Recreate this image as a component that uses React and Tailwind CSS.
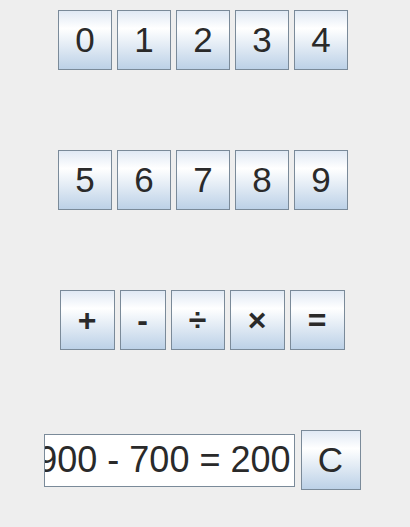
import React from "react";

const btn =
  "h-[60px] flex items-center justify-center border border-[#7a8a99] bg-[linear-gradient(to_bottom,#e0e9f4_0%,#ffffff_30%,#bcd1e7_100%)] text-[#2a2a2a]";

const Key = ({ label, w = "w-[54px]", op = false }) => (
  <button
    className={`${btn} ${w} ${op ? "text-[32px] font-bold" : "text-[35px]"}`}
  >
    {label}
  </button>
);

export default function App() {
  return (
    <div
      className="w-[410px] h-[527px] overflow-hidden bg-[#eeeeee]"
      style={{ fontFamily: '"Liberation Sans", Arial, sans-serif' }}
    >
      <div className="w-[406px] flex flex-col items-center pt-[10px] gap-[80px]">
        <div className="flex gap-[5px]">
          {["0", "1", "2", "3", "4"].map((d) => (
            <Key key={d} label={d} />
          ))}
        </div>
        <div className="flex gap-[5px]">
          {["5", "6", "7", "8", "9"].map((d) => (
            <Key key={d} label={d} />
          ))}
        </div>
        <div className="flex gap-[5px] mr-[2px]">
          <Key label="+" w="w-[55px]" op />
          <Key label="-" w="w-[46px]" op />
          <Key label="÷" w="w-[54px]" op />
          <Key label="×" w="w-[55px]" op />
          <Key label="=" w="w-[55px]" op />
        </div>
        <div className="flex items-center gap-[6px] mr-[2px]">
          <div className="w-[251px] h-[53px] bg-white border border-[#7a8a99] flex items-center justify-end overflow-hidden pr-[3px]">
            <span className="whitespace-nowrap text-[36px] text-[#2a2a2a]">
              900 - 700 = 200
            </span>
          </div>
          <button className={`${btn} w-[60px] text-[35px]`}>C</button>
        </div>
      </div>
    </div>
  );
}
